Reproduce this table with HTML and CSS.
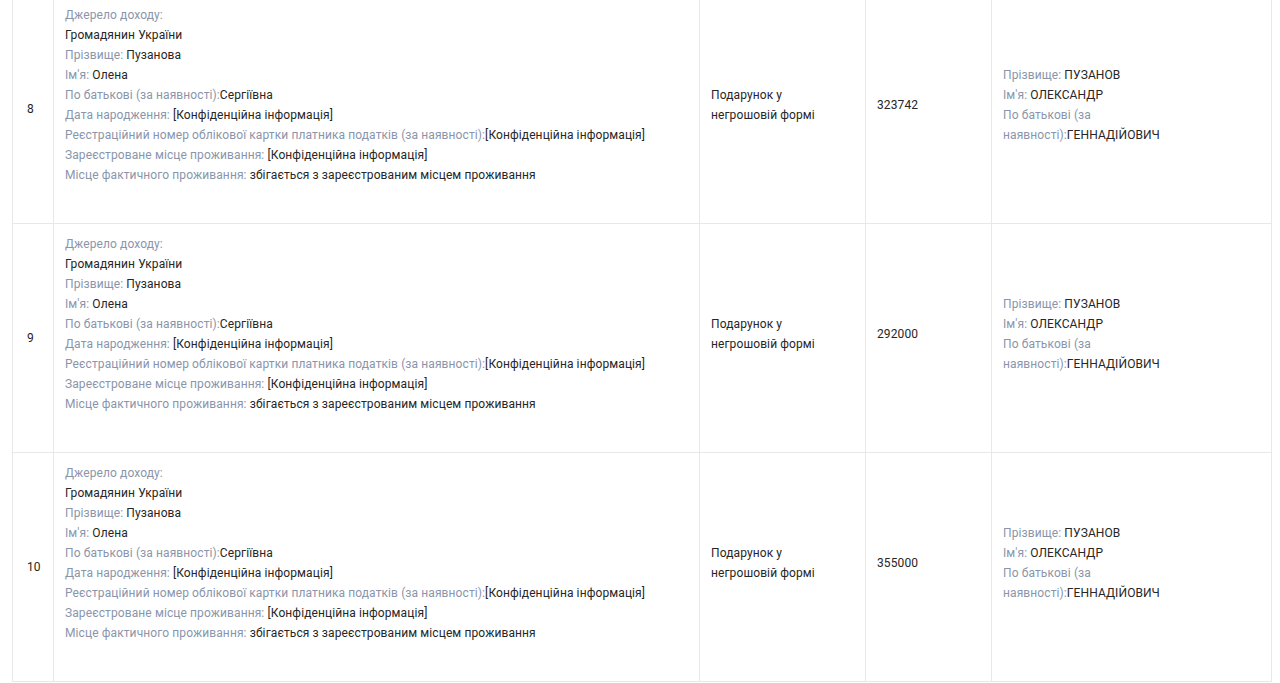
FILE: index.html
```html
<!DOCTYPE html>
<html lang="uk">
<head>
<meta charset="utf-8">
<title>Доходи</title>
<link rel="stylesheet" href="styles.css">
</head>
<body>
<table class="tbl">
  <colgroup>
    <col class="c-num"><col class="c-src"><col class="c-type"><col class="c-sum"><col class="c-owner">
  </colgroup>
  <tbody>
    <tr>
      <td class="num">8</td>
      <td class="src">
        <div class="ln"><span class="lb">Джерело доходу:</span></div>
        <div class="ln">Громадянин України</div>
        <div class="ln"><span class="lb">Прізвище: </span>Пузанова</div>
        <div class="ln"><span class="lb">Ім'я: </span>Олена</div>
        <div class="ln"><span class="lb">По батькові (за наявності):</span>Сергіївна</div>
        <div class="ln"><span class="lb">Дата народження: </span>[Конфіденційна інформація]</div>
        <div class="ln"><span class="lb">Реєстраційний номер облікової картки платника податків (за наявності):</span>[Конфіденційна інформація]</div>
        <div class="ln"><span class="lb">Зареєстроване місце проживання: </span>[Конфіденційна інформація]</div>
        <div class="ln"><span class="lb">Місце фактичного проживання: </span>збігається з зареєстрованим місцем проживання</div>
      </td>
      <td class="mid type">Подарунок у негрошовій формі</td>
      <td class="mid">323742</td>
      <td class="mid owner">
        <div class="ln"><span class="lb">Прізвище: </span>ПУЗАНОВ</div>
        <div class="ln"><span class="lb">Ім'я: </span>ОЛЕКСАНДР</div>
        <div class="ln"><span class="lb">По батькові (за</span></div>
        <div class="ln"><span class="lb">наявності):</span>ГЕННАДІЙОВИЧ</div>
      </td>
    </tr>
    <tr>
      <td class="num">9</td>
      <td class="src">
        <div class="ln"><span class="lb">Джерело доходу:</span></div>
        <div class="ln">Громадянин України</div>
        <div class="ln"><span class="lb">Прізвище: </span>Пузанова</div>
        <div class="ln"><span class="lb">Ім'я: </span>Олена</div>
        <div class="ln"><span class="lb">По батькові (за наявності):</span>Сергіївна</div>
        <div class="ln"><span class="lb">Дата народження: </span>[Конфіденційна інформація]</div>
        <div class="ln"><span class="lb">Реєстраційний номер облікової картки платника податків (за наявності):</span>[Конфіденційна інформація]</div>
        <div class="ln"><span class="lb">Зареєстроване місце проживання: </span>[Конфіденційна інформація]</div>
        <div class="ln"><span class="lb">Місце фактичного проживання: </span>збігається з зареєстрованим місцем проживання</div>
      </td>
      <td class="mid type">Подарунок у негрошовій формі</td>
      <td class="mid">292000</td>
      <td class="mid owner">
        <div class="ln"><span class="lb">Прізвище: </span>ПУЗАНОВ</div>
        <div class="ln"><span class="lb">Ім'я: </span>ОЛЕКСАНДР</div>
        <div class="ln"><span class="lb">По батькові (за</span></div>
        <div class="ln"><span class="lb">наявності):</span>ГЕННАДІЙОВИЧ</div>
      </td>
    </tr>
    <tr>
      <td class="num">10</td>
      <td class="src">
        <div class="ln"><span class="lb">Джерело доходу:</span></div>
        <div class="ln">Громадянин України</div>
        <div class="ln"><span class="lb">Прізвище: </span>Пузанова</div>
        <div class="ln"><span class="lb">Ім'я: </span>Олена</div>
        <div class="ln"><span class="lb">По батькові (за наявності):</span>Сергіївна</div>
        <div class="ln"><span class="lb">Дата народження: </span>[Конфіденційна інформація]</div>
        <div class="ln"><span class="lb">Реєстраційний номер облікової картки платника податків (за наявності):</span>[Конфіденційна інформація]</div>
        <div class="ln"><span class="lb">Зареєстроване місце проживання: </span>[Конфіденційна інформація]</div>
        <div class="ln"><span class="lb">Місце фактичного проживання: </span>збігається з зареєстрованим місцем проживання</div>
      </td>
      <td class="mid type">Подарунок у негрошовій формі</td>
      <td class="mid">355000</td>
      <td class="mid owner">
        <div class="ln"><span class="lb">Прізвище: </span>ПУЗАНОВ</div>
        <div class="ln"><span class="lb">Ім'я: </span>ОЛЕКСАНДР</div>
        <div class="ln"><span class="lb">По батькові (за</span></div>
        <div class="ln"><span class="lb">наявності):</span>ГЕННАДІЙОВИЧ</div>
      </td>
    </tr>
  </tbody>
</table>
</body>
</html>
```
FILE: styles.css
```css
html, body {
  margin: 0;
  padding: 0;
  background: #ffffff;
  overflow: hidden;
}
body {
  padding: 0 10px 0 12px;
  font-family: Roboto, "Liberation Sans", Arial, sans-serif;
  font-size: 12px;
  line-height: 20px;
  letter-spacing: 0.1px;
  color: #262626;
}
.tbl {
  margin-top: -6px;
  width: 1259px;
  table-layout: fixed;
  border-collapse: collapse;
}
.c-num { width: 41px; }
.c-src { width: 646px; }
.c-type { width: 166px; }
.c-sum { width: 126px; }
.c-owner { width: 280px; }
.tbl td {
  border: 1px solid #e8e8e8;
  vertical-align: middle;
}
.num {
  padding: 0 0 0 14px;
  height: 228px;
}
.src {
  padding: 10px 12px 38px 11px;
  vertical-align: top;
}
.mid {
  padding: 10px 12px 18px 11px;
}
.type {
  padding-right: 30px;
}
.lb {
  color: #8a95ab;
}
```
